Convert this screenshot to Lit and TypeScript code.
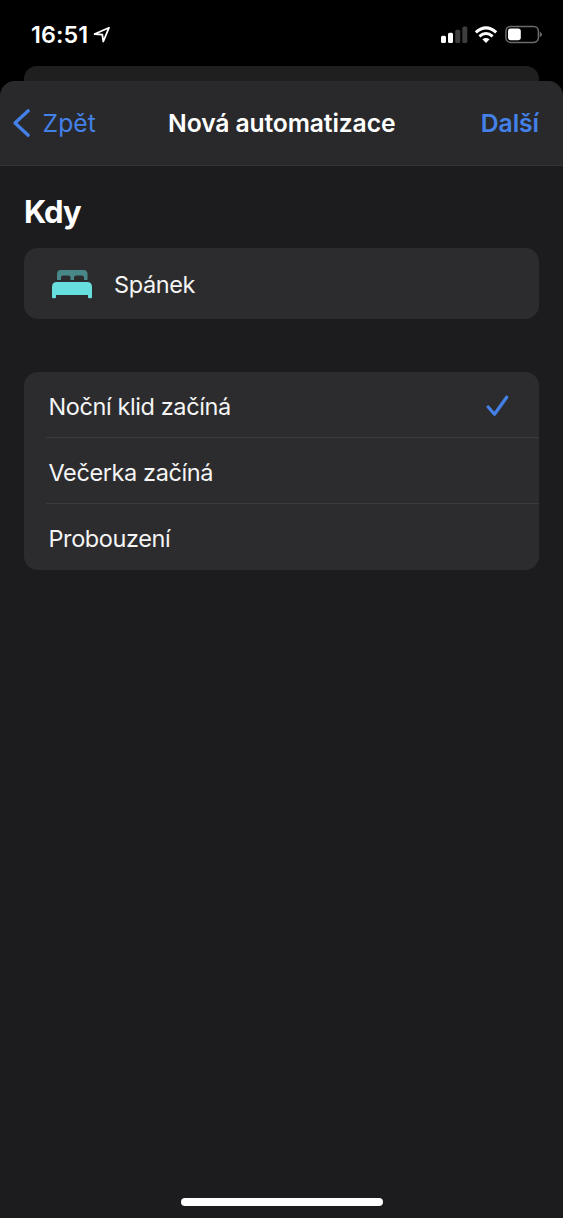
import { LitElement, html, css } from "lit";
import { customElement, state } from "lit/decorators.js";

@customElement("status-bar")
class StatusBar extends LitElement {
  static styles = css`
    :host { display: flex; align-items: center; justify-content: space-between; height: 66px; padding: 0 21px 0 31px; box-sizing: border-box; }
    .left, .right { display: flex; align-items: center; }
    .left { gap: 4.5px; padding-top: 3px; }
    .right { padding-top: 3px; }
    .time { font-size: 23.3px; font-weight: 600; line-height: 28px; letter-spacing: 0.1px; }
    svg { display: block; }
  `;
  render() {
    return html`
      <div class="left">
        <span class="time">16:51</span>
        <svg width="18" height="18" viewBox="0 0 18 18"><path d="M1.6 8 16 1.7 10.3 15.5 9.3 8.6Z" fill="none" stroke="#fff" stroke-width="1.8" stroke-linejoin="round"/></svg>
      </div>
      <div class="right">
        <svg width="101" height="20" viewBox="0 0 101 20">
          <g fill="#fff">
            <rect x="0" y="10.7" width="5" height="7.2" rx="1.5"/>
            <rect x="7" y="7.8" width="5" height="10.1" rx="1.5"/>
            <rect x="14.2" y="4.7" width="5" height="13.2" rx="1.5" opacity=".24"/>
            <rect x="21.3" y="1.4" width="5" height="16.5" rx="1.5" opacity=".24"/>
            <path d="M45 18 41.4 14.3Q45 11.5 48.6 14.3Z"/>
          </g>
          <g fill="none" stroke="#fff" stroke-width="3">
            <path d="M34.8 7.4Q45-1.7 55.2 7.4"/>
            <path d="M38.4 11.4Q45 5.6 51.6 11.4"/>
          </g>
          <rect x="64.9" y="1.4" width="32.5" height="16" rx="4.8" fill="none" stroke="#6b6b6b" stroke-width="1.5"/>
          <rect x="67" y="3.5" width="12.8" height="11.8" rx="2.7" fill="#fff"/>
          <path d="M98.8 6.7q2.2 1 2.2 2.8t-2.2 2.8Z" fill="#6b6b6b"/>
        </svg>
      </div>`;
  }
}

@customElement("nav-header")
class NavHeader extends LitElement {
  static styles = css`
    :host { display: grid; grid-template-columns: 1fr auto 1fr; align-items: center; height: 85px; padding: 0 24px 0 12px; box-sizing: border-box; background: #29292b; border-bottom: 1px solid #353537; font-size: 24.7px; line-height: 30px; }
    .back { display: flex; align-items: center; gap: 11.5px; color: #4381e8; }
    .back svg { display: block; }
    .back span { letter-spacing: 0.1px; }
    .title { padding-left: 12px; margin-right: -0.5px; font-weight: 600; letter-spacing: -0.13px; }
    .next { color: #4381e8; font-weight: 600; justify-self: end; letter-spacing: -0.05px; }
  `;
  render() {
    return html`
      <div class="back">
        <svg width="19" height="30" viewBox="0 0 19 30"><path d="M16.2 2.8 3 15l13.2 12.2" fill="none" stroke="#4381e8" stroke-width="3.3" stroke-linecap="round" stroke-linejoin="round"/></svg>
        <span>Zpět</span>
      </div>
      <div class="title">Nová automatizace</div>
      <div class="next">Další</div>`;
  }
}

@customElement("app-root")
class AppRoot extends LitElement {
  static styles = css`
    :host { display: flex; flex-direction: column; height: 1218px; overflow: hidden; background: #000; color: #fff; font-family: Inter, "Noto Sans", sans-serif; }
    .behind { flex: none; height: 15px; margin: 0 24px; border-radius: 13px 13px 0 0; background: #1f1f20; }
    .sheet { flex: 1; display: flex; flex-direction: column; border-radius: 15px 15px 0 0; overflow: hidden; background: #1c1c1e; }
    .body { flex: 1; padding: 27px 24px 0; }
    h1 { margin: 0 0 18px; font-size: 31px; line-height: 37px; font-weight: 700; letter-spacing: -1px; }
    .card { background: #2c2c2e; border-radius: 14px; overflow: hidden; font-size: 23.5px; color: #f5f5f5; letter-spacing: -0.4px; }
    .trigger { display: flex; align-items: center; height: 71px; padding-left: 28px; gap: 22px; }
    .trigger svg { display: block; margin-top: 2px; }
    .trigger span { padding-top: 2px; }
    .options { margin-top: 53px; }
    .row { display: flex; align-items: center; justify-content: space-between; height: 66px; box-sizing: border-box; margin-left: 22px; padding: 4px 30px 0 2.5px; }
    .row:first-child { height: 65px; padding-top: 3px; }
    .row:last-child { height: 67px; padding-top: 3px; }
    .row + .row { border-top: 1px solid #3b3b3d; }
    .row svg { display: block; }
    .home { align-self: center; width: 202px; height: 8px; margin-bottom: 12px; border-radius: 4px; background: #fff; }
  `;

  @state() private selected = 0;
  private options = ["Noční klid začíná", "Večerka začíná", "Probouzení"];

  render() {
    return html`
      <status-bar></status-bar>
      <div class="behind"></div>
      <div class="sheet">
        <nav-header></nav-header>
        <div class="body">
          <h1>Kdy</h1>
          <div class="card trigger">
            <svg width="40" height="29" viewBox="0 0 40 29">
              <path d="M5 10V4Q5 0 9 0H31.5Q35.5 0 35.5 4V10H32V7.5Q32 5.4 30 5.4H24Q22 5.4 22 7.5V10H18.5V7.5Q18.5 5.4 16.5 5.4H11Q9 5.4 9 7.5V10Z" fill="#498889"/>
              <path d="M0 17Q0 12 5 12H35Q40 12 40 17V27Q40 28.3 38.7 28.3H37.3Q36 28.3 36 27V25H4V27Q4 28.3 2.7 28.3H1.3Q0 28.3 0 27Z" fill="#68dfdf"/>
            </svg>
            <span>Spánek</span>
          </div>
          <div class="card options">
            ${this.options.map((label, i) => html`
              <div class="row" @click=${() => (this.selected = i)}>
                <span>${label}</span>
                ${i === this.selected
                  ? html`<svg width="23" height="23" viewBox="0 0 23 23"><path d="M2.2 12 8.5 19.2 20.7 2.3" fill="none" stroke="#4381e8" stroke-width="3.2" stroke-linecap="round" stroke-linejoin="round"/></svg>`
                  : ""}
              </div>`)}
          </div>
        </div>
        <div class="home"></div>
      </div>`;
  }
}
